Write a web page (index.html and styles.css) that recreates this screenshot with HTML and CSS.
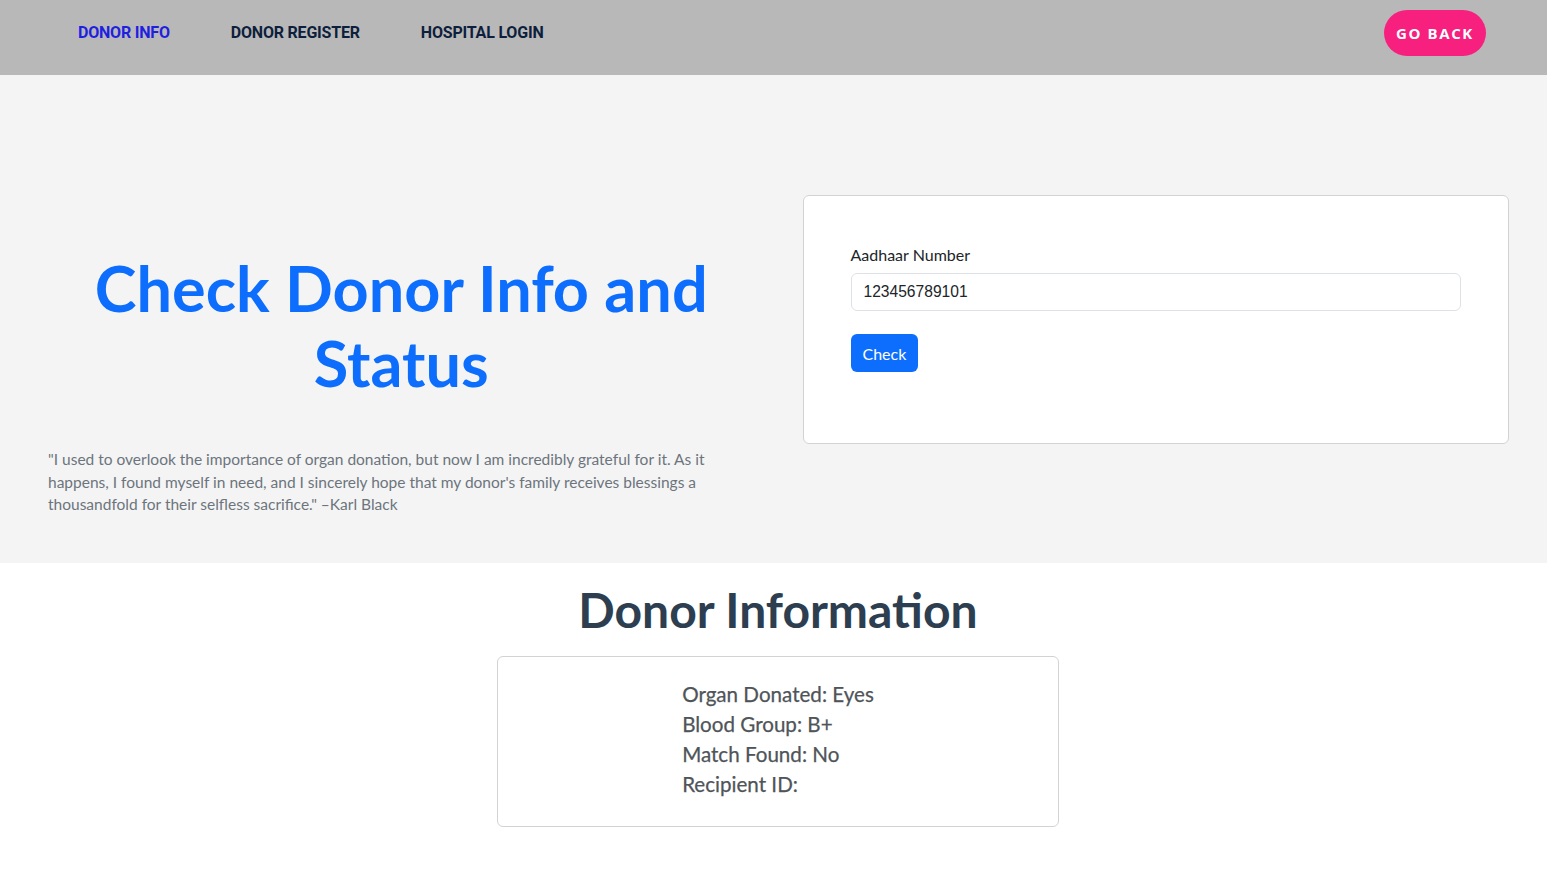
FILE: index.html
```html
<!DOCTYPE html>
<html lang="en">
<head>
<meta charset="utf-8">
<title>Check Donor Info</title>
<link rel="stylesheet" href="styles.css">
</head>
<body>
<header class="navbar">
  <nav class="nav-links">
    <a class="nav-link active" href="#">DONOR INFO</a>
    <a class="nav-link" href="#">DONOR REGISTER</a>
    <a class="nav-link" href="#">HOSPITAL LOGIN</a>
  </nav>
  <a class="go-back" href="#">GO BACK</a>
</header>

<section class="hero">
  <div class="hero-left">
    <h1 class="hero-title">Check Donor Info and Status</h1>
    <p class="quote">"I used to overlook the importance of organ donation, but now I am incredibly grateful for it. As it happens, I found myself in need, and I sincerely hope that my donor's family receives blessings a thousandfold for their selfless sacrifice." –Karl Black</p>
  </div>
  <div class="hero-right">
    <form class="card">
      <label class="form-label" for="aadhaar">Aadhaar Number</label>
      <input class="form-input" id="aadhaar" type="text" value="123456789101">
      <button class="btn-check" type="button">Check</button>
    </form>
  </div>
</section>

<section class="info">
  <h2 class="info-title">Donor Information</h2>
  <div class="info-box">
    <div class="info-list">
      <div class="info-row">Organ Donated: Eyes</div>
      <div class="info-row">Blood Group: B+</div>
      <div class="info-row">Match Found: No</div>
      <div class="info-row">Recipient ID:</div>
    </div>
  </div>
</section>
</body>
</html>
```

FILE: styles.css
```css
* { box-sizing: border-box; }

body {
  margin: 0;
  font-family: "Lato", "Liberation Sans", sans-serif;
  background: #ffffff;
  color: #212529;
}

.navbar {
  height: 75px;
  background: #b8b8b8;
  display: flex;
  align-items: center;
  justify-content: space-between;
  padding: 0 61px 0 78px;
}

.nav-links {
  display: flex;
  gap: 61px;
  align-items: center;
  margin-top: -11px;
}

.nav-link {
  font-family: "Roboto", "Liberation Sans", sans-serif;
  font-weight: 700;
  font-size: 16px;
  color: #0d1f3c;
  text-decoration: none;
  letter-spacing: -0.2px;
}

.nav-link.active { color: #1f1fe0; }

.go-back {
  display: flex;
  align-items: center;
  justify-content: center;
  width: 102px;
  height: 46px;
  margin-top: -9px;
  border-radius: 23px;
  background: #f7207f;
  color: #ffffff;
  font-family: "Open Sans", "Liberation Sans", sans-serif;
  font-weight: 700;
  font-size: 15px;
  letter-spacing: 1.6px;
  text-decoration: none;
}

.hero {
  background: #f4f4f4;
  display: grid;
  grid-template-columns: 1fr 1fr;
  column-gap: 48px;
  padding: 120px 38px 47px 48px;
  align-items: start;
}

.hero-left {
  padding-top: 55px;
}

.hero-title {
  margin: 0 0 48px;
  text-align: center;
  color: #0d6efd;
  font-family: "Lato", sans-serif;
  font-weight: 700;
  font-size: 63px;
  line-height: 75px;
}

.quote {
  margin: 0;
  color: #6c757d;
  font-size: 15.5px;
  line-height: 22.5px;
}

.card {
  background: #ffffff;
  border: 1px solid #d3d3d3;
  border-radius: 6px;
  padding: 47px 47px 71px;
  display: flex;
  flex-direction: column;
  align-items: flex-start;
}

.form-label {
  font-size: 16px;
  color: #212529;
  line-height: 24px;
  margin-bottom: 6px;
}

.form-input {
  width: 100%;
  height: 38px;
  border: 1px solid #dee2e6;
  border-radius: 6px;
  padding: 0 12px;
  font-family: "Liberation Sans", Arial, sans-serif;
  font-size: 15.6px;
  color: #212529;
  background: #fff;
  margin-bottom: 23px;
}

.btn-check {
  height: 38px;
  padding: 0 12px;
  border: none;
  border-radius: 6px;
  background: #0d6efd;
  color: #ffffff;
  font-family: "Lato", sans-serif;
  font-size: 16px;
}

.info {
  display: flex;
  flex-direction: column;
  align-items: center;
  padding: 18px 0 48px 9px;
}

.info-title {
  margin: 0 0 18px;
  color: #2c3e50;
  font-family: "Lato", sans-serif;
  font-weight: 700;
  font-size: 48px;
  line-height: 57.6px;
}

.info-box {
  width: 562px;
  border: 1px solid #d3d3d3;
  border-radius: 6px;
  padding: 22px 0 27px;
  display: flex;
  justify-content: center;
}

.info-list {
  color: #4f5459;
  font-size: 20.6px;
  line-height: 30px;
  -webkit-text-stroke: 0.25px #4f5459;
}
```
